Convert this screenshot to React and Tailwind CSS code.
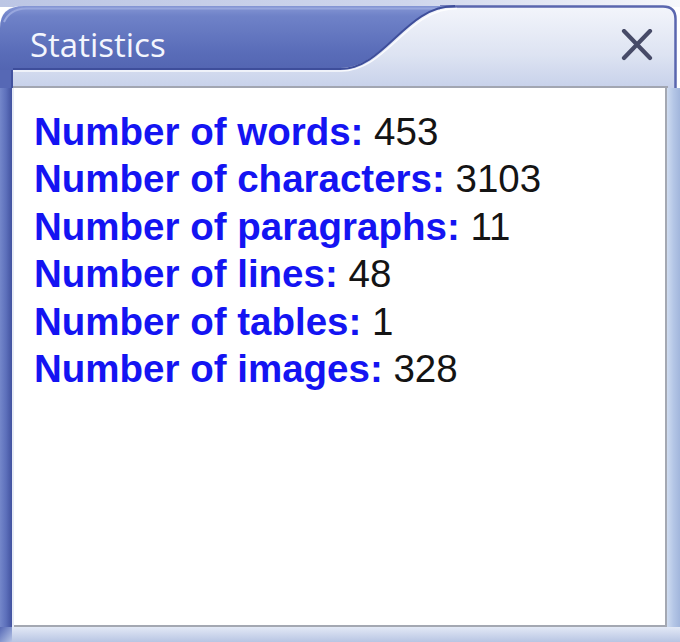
const stats = [
  { label: 'Number of words:', value: '453' },
  { label: 'Number of characters:', value: '3103' },
  { label: 'Number of paragraphs:', value: '11' },
  { label: 'Number of lines:', value: '48' },
  { label: 'Number of tables:', value: '1' },
  { label: 'Number of images:', value: '328' },
];

// Title bar chrome: the blue tab with its S-curve, the light right part and the band below
const TitleChrome = () => (
  <svg className="absolute inset-0" width="680" height="88" viewBox="0 0 680 88">
    <defs>
      <linearGradient id="light" x1="0" y1="0" x2="0" y2="1">
        <stop offset="0" stopColor="#f3f5fb" />
        <stop offset="0.6" stopColor="#dde3f2" />
        <stop offset="1" stopColor="#c7d1ea" />
      </linearGradient>
      <linearGradient id="blue" x1="0" y1="0" x2="0" y2="1">
        <stop offset="0" stopColor="#8596d4" />
        <stop offset="0.12" stopColor="#6f82c8" />
        <stop offset="0.55" stopColor="#5a6db9" />
        <stop offset="1" stopColor="#4c5eab" />
      </linearGradient>
      <linearGradient id="top" x1="0" y1="0" x2="1" y2="0">
        <stop offset="0" stopColor="#bcc6e4" />
        <stop offset="0.6" stopColor="#cfd6ec" />
        <stop offset="1" stopColor="#f6f7fb" />
      </linearGradient>
    </defs>
    <rect x="0" y="0" width="680" height="7" fill="url(#top)" />
    <path d="M0 88 V26 Q0 6 22 6 H663 Q676 6 676 19 V88 Z" fill="url(#light)" />
    <path d="M440 6.5 H663 Q675.5 6.5 675.5 19 V88" fill="none" stroke="#5a66ae" strokeWidth="2.5" />
    <path d="M0 88 V28 Q0 6 24 6 H455 C405 6 385 68 340 68 H13 V88 Z" fill="url(#blue)" />
    <path d="M4 22 Q10 9 26 8.5 H440" fill="none" stroke="#98a7de" strokeWidth="2" />
    <path d="M13 69 H340 C385 69 405 6 455 6" fill="none" stroke="#3e4e9b" strokeWidth="2" />
    <path d="M13 71 H341 C387 71 407 8.5 457 8.5" fill="none" stroke="#ffffff" strokeOpacity="0.85" strokeWidth="1.5" />
    <rect x="0" y="70" width="12" height="18" fill="#5668b5" />
    <rect x="11" y="70" width="2" height="18" fill="#42529f" />
    <rect x="13" y="86" width="655" height="2" fill="#a2a6b1" />
  </svg>
);

export default function App() {
  return (
    <div className="flex h-[642px] w-[680px] flex-col overflow-hidden bg-white">
      <div className="relative h-[88px] shrink-0">
        <TitleChrome />
        <div className="relative flex h-[33px] items-center justify-between pl-[30px] pr-[27px] mt-[28px]">
          <span className="text-[33px] leading-[33px] text-[#f4f6fd] [font-family:'Open_Sans',sans-serif]">
            Statistics
          </span>
          <svg width="32" height="32" viewBox="0 0 32 32">
            <path d="M3 2 L29 29 M29 2 L3 29" stroke="#474b68" strokeWidth="4.2" strokeLinecap="round" />
          </svg>
        </div>
      </div>

      <div className="flex h-[539px] shrink-0">
        <div className="w-[14px] shrink-0 border-r-2 border-r-[#e6ebf6] bg-gradient-to-r from-[#7487ca] via-[#5d70bb] to-[#42529f]" />
        <div className="flex-1 border-b-2 border-r-2 border-[#a4a8b2] bg-white pl-[20px] pt-[20px]">
          {stats.map((s) => (
            <div
              key={s.label}
              className="whitespace-nowrap text-[38.5px] leading-[47.4px] [font-family:'Liberation_Sans',Arial,sans-serif]"
            >
              <span className="font-bold text-[#1414f2]">{s.label}</span>
              <span className="text-[#141414]"> {s.value}</span>
            </div>
          ))}
        </div>
        <div className="w-[13px] shrink-0 bg-gradient-to-r from-[#cfdcf0] via-[#b4c6e6] to-[#a2b6dc]" />
      </div>

      <div className="flex h-[15px] shrink-0">
        <div className="w-[12px] bg-gradient-to-br from-[#5668b5] to-[#b9c6e6]" />
        <div className="flex-1 bg-gradient-to-b from-[#e3e9f6] to-[#b8c5e3]" />
      </div>
    </div>
  );
}
